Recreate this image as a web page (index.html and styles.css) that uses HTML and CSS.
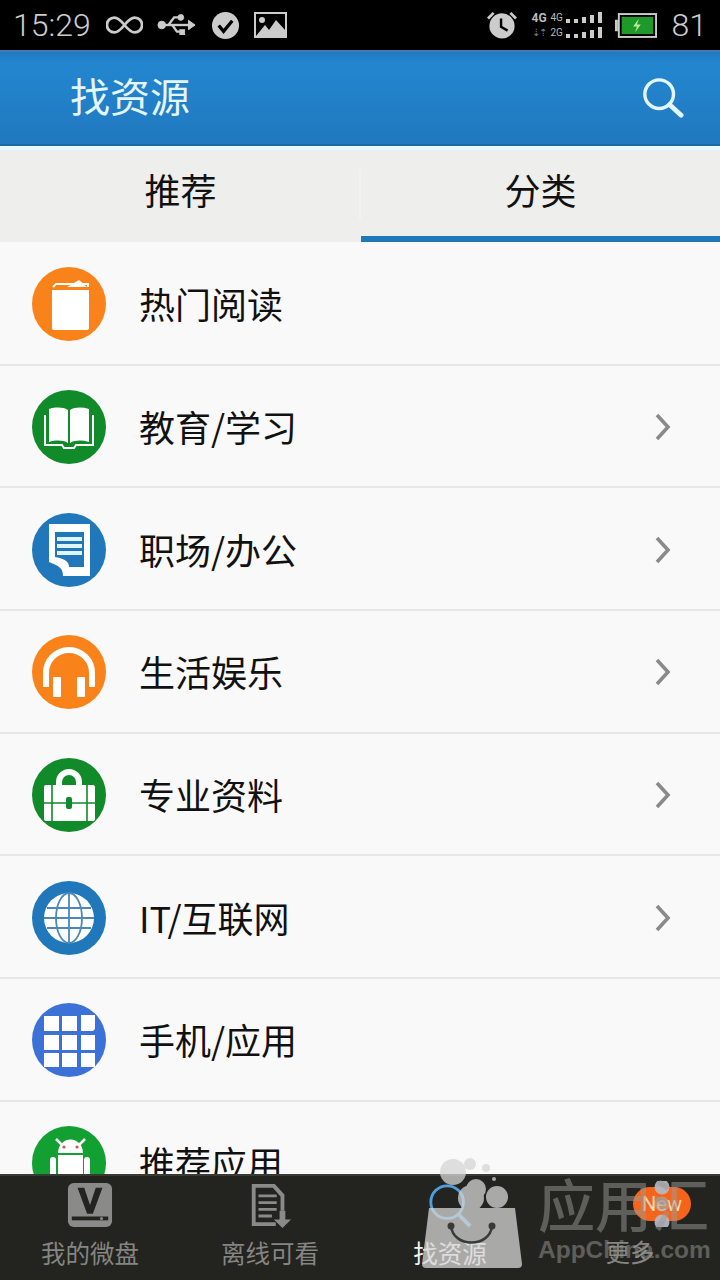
FILE: index.html
```html
<!DOCTYPE html>
<html lang="zh">
<head>
<meta charset="utf-8">
<title>找资源</title>
<link rel="stylesheet" href="styles.css">
</head>
<body>
<div class="app">
  <div class="status">
    <div class="status-group">
      <span class="status-time">15:29</span>
      <svg class="si" width="37" height="24" viewBox="0 0 40 24"><path d="M20 12c-4-5-7-8-11-8a8 8 0 0 0 0 16c4 0 7-3 11-8c4-5 7-8 11-8a8 8 0 0 1 0 16c-4 0-7-3-11-8z" fill="none" stroke="#ccc" stroke-width="3"/></svg>
      <svg class="si" width="40" height="28" viewBox="0 0 42 28"><g fill="#ccc" stroke="#ccc"><circle cx="5" cy="14" r="4"/><path d="M5 14h32" stroke-width="2.5"/><path d="M33 9l7 5-7 5z"/><path d="M12 14l6-8h6M16 14l5 7h4" fill="none" stroke-width="2.5"/><circle cx="25" cy="6" r="3"/><rect x="24" y="19" width="5" height="5"/></g></svg>
      <svg class="si" width="29" height="29" viewBox="0 0 30 30"><circle cx="15" cy="15" r="14" fill="#ccc"/><path d="M8 15l5 6 9-11" fill="none" stroke="#000" stroke-width="3.4"/></svg>
      <svg class="si" width="33" height="26" viewBox="0 0 33 26"><path fill="#ccc" fill-rule="evenodd" d="M0 0h33v26H0zM2 2v22h29V2z"/><path fill="#ccc" d="M2 24l9-11 4 5 7-10 9 10v6z"/><circle cx="8" cy="8" r="3" fill="#ccc"/></svg>
    </div>
    <div class="status-group status-right">
      <svg class="si" width="30" height="28" viewBox="0 0 32 30"><circle cx="16" cy="16" r="13.5" fill="#ccc"/><path d="M15 8v9l7 4" fill="none" stroke="#000" stroke-width="2.6"/><path d="M1 8l6-6M31 8l-6-6" stroke="#ccc" stroke-width="3"/></svg>
      <div class="signal">
        <div class="sig-row"><span class="sig-big">4G</span><span class="sig-small">4G</span><span class="bars"><i class="b1"></i><i class="b1"></i><i class="b2"></i><i class="b3"></i><i class="b4"></i></span></div>
        <div class="sig-row"><span class="sig-arrows">⇣⇡</span><span class="sig-small">2G</span><span class="bars"><i class="b1"></i><i class="b1"></i><i class="b2"></i><i class="b3"></i><i class="b4"></i></span></div>
      </div>
      <svg class="si" width="42" height="25" viewBox="0 0 44 26"><rect x="0" y="7" width="3" height="12" fill="#ccc"/><rect x="4" y="1" width="39" height="24" fill="none" stroke="#ccc" stroke-width="2"/><rect x="7" y="4" width="33" height="18" fill="#1f9a2a"/><path d="M25 6l-6 8h4l-2 6 6-8h-4z" fill="#bfe8a0"/></svg>
      <span class="status-batt">81</span>
    </div>
  </div>

  <header class="appbar">
    <h1 class="appbar-title">找资源</h1>
    <svg width="42" height="42" viewBox="0 0 44 44"><circle cx="18" cy="18" r="15" fill="none" stroke="#e4f6fc" stroke-width="3.6"/><path d="M29 29l12 11" stroke="#e4f6fc" stroke-width="5" stroke-linecap="round"/></svg>
  </header>

  <nav class="tabs">
    <div class="tab tab-first">推荐</div>
    <div class="tab tab-active">分类</div>
  </nav>

  <main class="list">
    <div class="row">
      <span class="badge orange"><svg width="74" height="74" viewBox="0 0 74 74"><path fill="#fff" d="M20 23h37v38a2 2 0 0 1-2 2H22a2 2 0 0 1-2-2z"/><path fill="none" stroke="#fff" stroke-width="2" d="M21 20l3-3h32v3"/><path fill="#fff" d="M35 20l12-7 8 7z"/></svg></span>
      <span class="row-label">热门阅读</span>
    </div>
    <div class="row">
      <span class="badge green"><svg width="74" height="74" viewBox="0 0 74 74"><path fill="#fff" d="M17 19c7-2 14-2 19 1v33c-5-3-12-3-19-1zM57 19c-7-2-14-2-19 1v33c5-3 12-3 19-1z"/><path fill="none" stroke="#fff" stroke-width="2" d="M13 25v30h17l2 3h10l2-3h17V25"/></svg></span>
      <span class="row-label">教育/学习</span>
      <svg width="18" height="30" viewBox="0 0 18 30"><path d="M3 3l11 12L3 27" fill="none" stroke="#8a8a8a" stroke-width="3.6"/></svg>
    </div>
    <div class="row">
      <span class="badge blue"><svg width="74" height="74" viewBox="0 0 74 74"><path fill="#fff" d="M17 11h41v52H31c0-8-4-10-14-14z"/><path fill="#2078bb" d="M23 19h29v35H37c0-5-3-8-14-10z"/><path fill="#dff5fb" d="M25 24h25v4H25zM25 31h25v4H25zM25 38h25v4H25z"/></svg></span>
      <span class="row-label">职场/办公</span>
      <svg width="18" height="30" viewBox="0 0 18 30"><path d="M3 3l11 12L3 27" fill="none" stroke="#8a8a8a" stroke-width="3.6"/></svg>
    </div>
    <div class="row">
      <span class="badge orange"><svg width="74" height="74" viewBox="0 0 74 74"><path fill="none" stroke="#fff" stroke-width="6" d="M14 52V38a23 23 0 0 1 46 0v14"/><rect x="21" y="42" width="8" height="20" rx="1" fill="#fff"/><rect x="45" y="42" width="8" height="20" rx="1" fill="#fff"/></svg></span>
      <span class="row-label">生活娱乐</span>
      <svg width="18" height="30" viewBox="0 0 18 30"><path d="M3 3l11 12L3 27" fill="none" stroke="#8a8a8a" stroke-width="3.6"/></svg>
    </div>
    <div class="row">
      <span class="badge green"><svg width="74" height="74" viewBox="0 0 74 74"><path fill="none" stroke="#fff" stroke-width="6" d="M27 28v-4a10 10 0 0 1 20 0v4"/><rect x="12" y="27" width="51" height="36" rx="2" fill="#fff"/><path d="M20 27v36M55 27v36M12 45h51" stroke="#118a2a" stroke-width="1.6"/><rect x="34" y="39" width="6" height="12" rx="2" fill="#118a2a"/></svg></span>
      <span class="row-label">专业资料</span>
      <svg width="18" height="30" viewBox="0 0 18 30"><path d="M3 3l11 12L3 27" fill="none" stroke="#8a8a8a" stroke-width="3.6"/></svg>
    </div>
    <div class="row">
      <span class="badge blue"><svg width="74" height="74" viewBox="0 0 74 74"><circle cx="37" cy="37" r="25" fill="#fff"/><g fill="none" stroke="#4a88b5" stroke-width="1.8"><ellipse cx="37" cy="37" rx="13" ry="25"/><path d="M37 12v50M15 27h44M12 37h50M15 47h44"/></g></svg></span>
      <span class="row-label">IT/互联网</span>
      <svg width="18" height="30" viewBox="0 0 18 30"><path d="M3 3l11 12L3 27" fill="none" stroke="#8a8a8a" stroke-width="3.6"/></svg>
    </div>
    <div class="row">
      <span class="badge royal"><svg width="74" height="74" viewBox="0 0 74 74"><path fill="#fff" d="M12 13h15v15H12zM30 13h15v15H30zM49 12h14v14l-2 2H49zM12 32h15v15H12zM30 32h15v15H30zM49 32h14v15H49zM12 50h15v14H12zM30 50h15v14H30zM49 50h14v14H49z"/></svg></span>
      <span class="row-label">手机/应用</span>
    </div>
    <div class="row">
      <span class="badge green-bright"><svg width="74" height="74" viewBox="0 0 74 74"><path fill="#fff" d="M26 27a12 13 0 0 1 25 0zM26 29h25v45H26zM18 34a3 3 0 0 1 6 0v18a3 3 0 0 1-6 0zM52 34a3 3 0 0 1 6 0v18a3 3 0 0 1-6 0z"/><path stroke="#fff" stroke-width="2.5" d="M24 13l6 6M53 13l-6 6"/><circle cx="32" cy="21" r="1.6" fill="#c55"/><circle cx="45" cy="21" r="1.6" fill="#c55"/></svg></span>
      <span class="row-label">推荐应用</span>
    </div>
  </main>

  <footer class="tabbar">
    <div class="bar-item">
      <svg width="46" height="46" viewBox="0 0 48 48"><rect x="1" y="1" width="46" height="46" rx="6" fill="#8a8a88"/><path d="M11 6h7l6 18 6-18h7L27 33h-6z" fill="#23231f"/><rect x="5" y="36" width="38" height="4" fill="#23231f"/><circle cx="36" cy="38" r="1.6" fill="#8a8a88"/></svg>
      <span class="bar-label">我的微盘</span>
    </div>
    <div class="bar-item">
      <svg width="46" height="46" viewBox="0 0 48 48"><path d="M5 2h24l10 11v17h-4V15l-8-9H9v36h21v4H5z" fill="#8a8a88"/><path d="M12 13h19v3H12zM12 20h19v3H12zM12 27h19v3H12zM12 34h14v3H12z" fill="#8a8a88"/><path d="M34 30h6v9h6L37 48l-9-9h6z" fill="#8a8a88"/></svg>
      <span class="bar-label">离线可看</span>
    </div>
    <div class="bar-item">
      <svg width="46" height="46" viewBox="0 0 48 48"><circle cx="21" cy="21" r="17" fill="none" stroke="#4f9fdb" stroke-width="3"/><path d="M32 33l13 13" stroke="#4f9fdb" stroke-width="4"/></svg>
      <span class="bar-label bar-label-on">找资源</span>
    </div>
    <div class="bar-item">
      <span class="new-badge">New</span>
      <svg class="more-dots" width="46" height="46" viewBox="0 0 46 46"><circle cx="23" cy="6" r="7.5" fill="#b8bcc8"/><circle cx="23" cy="23" r="7.5" fill="#a8a8a8" opacity=".7"/><circle cx="23" cy="41" r="7.5" fill="#b8bcc8"/></svg>
      <span class="bar-label">更多</span>
    </div>
  </footer>

  <div class="watermark">
    <svg width="104" height="115" viewBox="0 0 104 115"><g fill="#d6d6d6" opacity=".75"><circle cx="32" cy="14" r="13"/><circle cx="49" cy="6" r="6"/><circle cx="65" cy="10" r="4"/><circle cx="73" cy="21" r="2"/><circle cx="55" cy="31" r="10"/><circle cx="50" cy="40" r="13"/><circle cx="76" cy="39" r="11"/><path d="M8 50h86l7 56a4 4 0 0 1-4 4H5a4 4 0 0 1-4-4z"/></g><path d="M30 68c2 22 39 22 41 0" fill="none" stroke="#3a3a38" stroke-width="2.5"/><circle cx="30" cy="68" r="3.5" fill="#3a3a38"/><circle cx="71" cy="68" r="3.5" fill="#3a3a38"/></svg>
    <div class="wm-text">
      <span class="wm-cn">应用汇</span>
      <span class="wm-en">AppChina.com</span>
    </div>
  </div>
</div>
</body>
</html>
```
FILE: styles.css
```css
* { box-sizing: border-box; }
html, body { margin: 0; padding: 0; }
body { width: 720px; height: 1280px; overflow: hidden; font-family: "Noto Sans CJK SC", "Roboto", sans-serif; }
svg { display: block; flex: none; }

.app { position: relative; width: 720px; height: 1280px; display: flex; flex-direction: column; background: #f9f9f9; overflow: hidden; }

.status { height: 50px; flex: none; background: #000; color: #ccc; display: flex; justify-content: space-between; align-items: center; padding: 0 13px 0 13px; }
.status-group { display: flex; align-items: center; gap: 14px; }
.status-right { gap: 15px; }
.status-time { margin-right: 1px; }
.status-time, .status-batt { font-family: "Roboto", sans-serif; font-weight: 300; font-size: 32px; line-height: 50px; }

.signal { display: flex; flex-direction: column; gap: 3px; width: 70px; margin-right: -2px; }
.sig-row { display: flex; align-items: center; height: 12px; gap: 3px; font-family: "Roboto", sans-serif; color: #bbb; }
.sig-big { font-size: 12px; font-weight: 700; width: 16px; }
.sig-arrows { font-size: 10px; width: 16px; letter-spacing: -1px; color: #888; }
.sig-small { font-size: 10px; width: 12px; }
.bars { display: flex; align-items: flex-end; gap: 4px; height: 11px; }
.bars i { display: block; width: 4px; background: #ccc; }
.b1 { height: 4px; }
.b2 { height: 6px; }
.b3 { height: 8px; }
.b4 { height: 11px; }

.appbar { height: 96px; flex: none; display: flex; align-items: center; justify-content: space-between; padding: 0 36px 0 70px; background: linear-gradient(#2178c5 0, #2286cf 12%, #2179bf 100%); border-top: 2px solid #3f7fb5; border-bottom: 2px solid #1c6aa3; }
.appbar-title { margin: 0 0 6px; font-size: 40px; line-height: 1; font-weight: 400; color: #e4f6fc; }

.tabs { height: 96px; flex: none; display: grid; grid-template-columns: 361px 359px; background: #eeeeec; border-top: 4px solid #e8f8fc; }
.tab { display: flex; align-items: center; justify-content: center; font-size: 36px; line-height: 1; color: #111; padding-bottom: 14px; }
.tab-first { position: relative; }
.tab-first::after { content: ""; position: absolute; right: 0; top: 20px; height: 50px; width: 2px; background: #f2f2f1; }
.tab-active { border-bottom: 6px solid #2178b8; padding-bottom: 8px; }

.list { flex: 1; min-height: 0; overflow: hidden; padding-top: 1px; }
.row { height: 122.67px; display: flex; align-items: center; padding: 2px 48px 0 32px; border-bottom: 2px solid #e6e6e6; }
.badge { width: 74px; height: 74px; border-radius: 50%; flex: none; }
.orange { background: #f9831a; }
.green { background: #118a2a; }
.blue { background: #2078bb; }
.royal { background: #3c72d8; }
.green-bright { background: #12a033; overflow: hidden; }
.row-label { flex: 1; margin-left: 33px; padding-bottom: 2px; font-size: 36px; line-height: 1; color: #111; }

.tabbar { height: 106px; flex: none; display: grid; grid-template-columns: repeat(4, 180px); background: #23231f; border-top: 2px solid #3a3a34; }
.bar-item { position: relative; display: flex; flex-direction: column; align-items: center; padding-top: 6px; }
.bar-label { margin-top: 9px; font-size: 24.5px; line-height: 32px; color: #858583; }
.bar-label-on { color: #f2f2f2; }
.new-badge { position: absolute; top: 11px; right: 29px; width: 58px; height: 34px; border-radius: 17px; background: #f4641b; color: #ffdcb8; font-family: "Roboto", sans-serif; font-size: 20px; line-height: 34px; text-align: center; }
.more-dots { position: relative; margin-left: 64px; margin-top: -1px; opacity: .9; }

.watermark { position: absolute; left: 421px; top: 1158px; display: flex; gap: 13px; pointer-events: none; }
.wm-text { display: flex; flex-direction: column; padding-top: 11px; opacity: .5; color: #9a9a98; }
.wm-cn { font-size: 57px; line-height: 66px; font-weight: 500; white-space: nowrap; }
.wm-en { font-family: "Liberation Sans", sans-serif; font-size: 24.5px; line-height: 30px; font-weight: 700; white-space: nowrap; }
```
